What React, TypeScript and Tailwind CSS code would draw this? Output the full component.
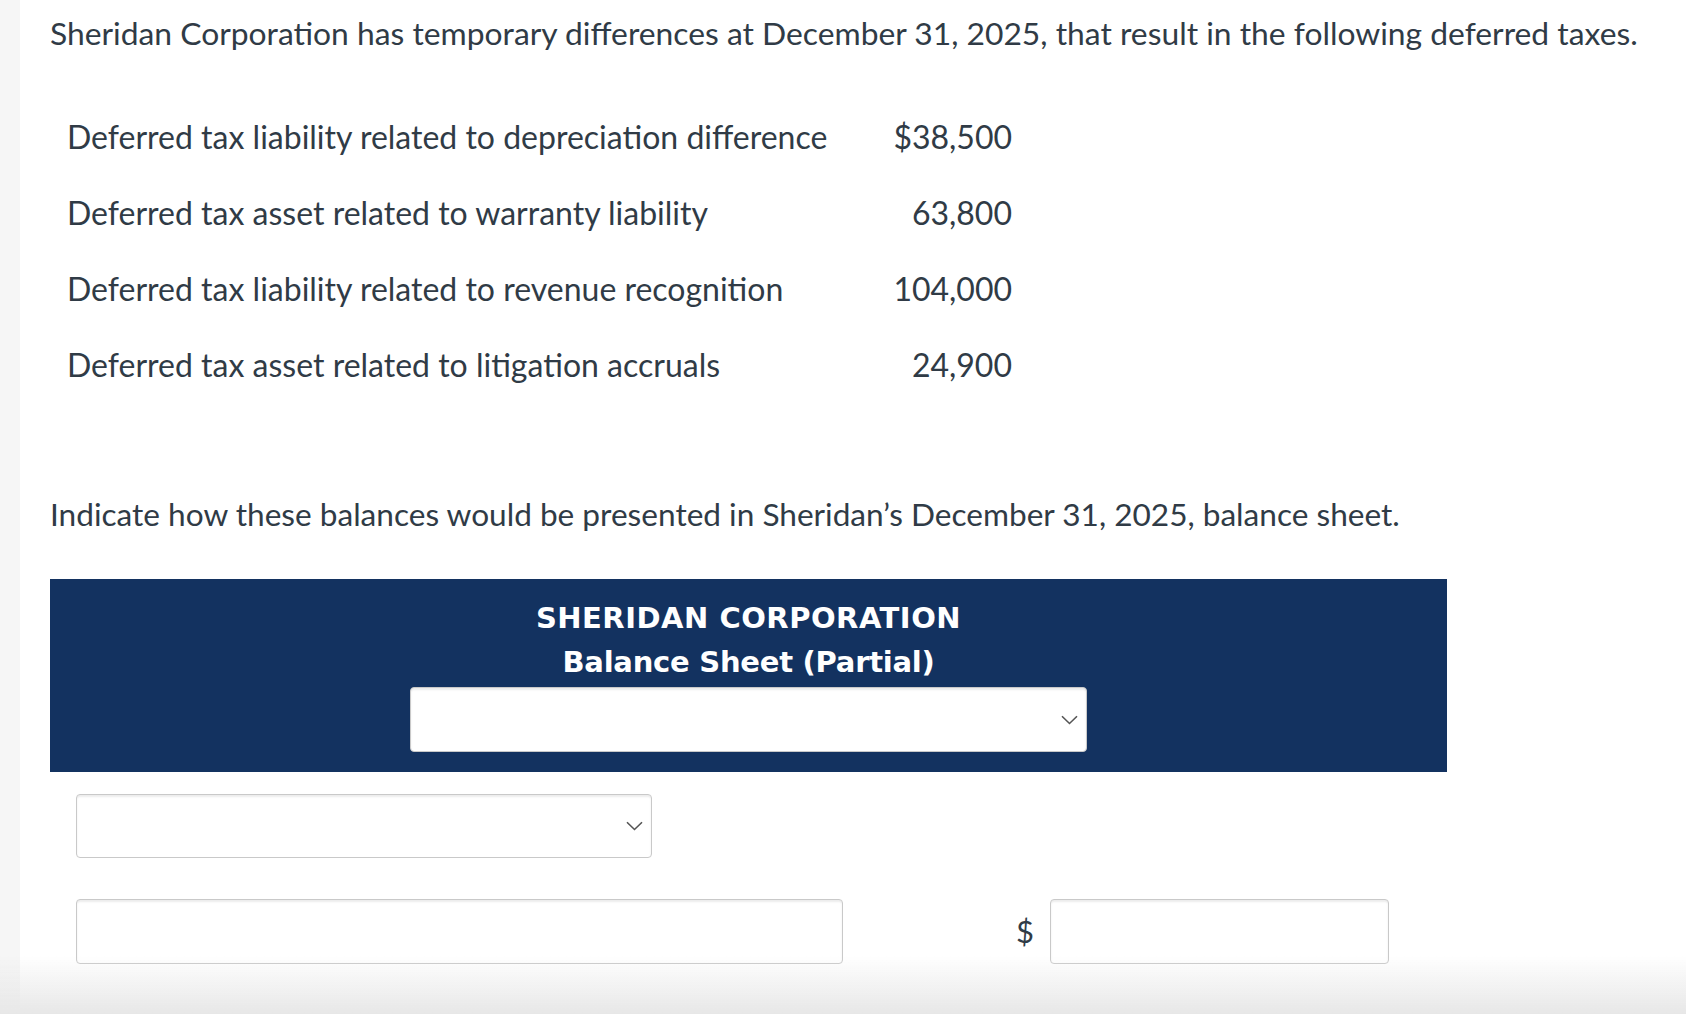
import React from 'react';

const rows = [
  { label: 'Deferred tax liability related to depreciation difference', amount: '$38,500' },
  { label: 'Deferred tax asset related to warranty liability', amount: '63,800' },
  { label: 'Deferred tax liability related to revenue recognition', amount: '104,000' },
  { label: 'Deferred tax asset related to litigation accruals', amount: '24,900' },
];

const Chevron: React.FC = () => (
  <svg width="17" height="10" viewBox="0 0 17 10" className="shrink-0">
    <path d="M1 1.2 L8.5 8.5 L16 1.2" fill="none" stroke="#555" strokeWidth="1.6" />
  </svg>
);

const SelectBox: React.FC<{ className?: string }> = ({ className }) => (
  <div
    className={`flex items-center justify-end pr-[8px] bg-white border border-[#c9c9c9] rounded-[4px] shadow-[inset_0_2px_2px_rgba(0,0,0,0.08)] ${className ?? ''}`}
  >
    <Chevron />
  </div>
);

const InputBox: React.FC<{ className?: string }> = ({ className }) => (
  <div
    className={`bg-white border border-[#c9c9c9] rounded-[4px] shadow-[inset_0_2px_2px_rgba(0,0,0,0.08)] ${className ?? ''}`}
  />
);

const App: React.FC = () => {
  return (
    <div className="min-h-screen flex bg-white text-[#303b46] font-['Lato','Open_Sans',sans-serif]">
      {/* left rail */}
      <div className="w-[20px] shrink-0 bg-[#f6f6f6]" />

      <div className="flex-1 pl-[30px] pt-[13px]">
        <p className="text-[31.8px] leading-[40px] whitespace-nowrap">
          Sheridan Corporation has temporary differences at December 31, 2025, that result in the following deferred taxes.
        </p>

        {/* deferred tax items */}
        <div className="mt-[46px] ml-[17px]">
          {rows.map(row => (
            <div key={row.label} className="flex h-[76px] items-center text-[32px]">
              <span className="w-[760px] whitespace-nowrap">{row.label}</span>
              <span className="w-[185px] text-right">{row.amount}</span>
            </div>
          ))}
        </div>

        <p className="mt-[91px] text-[31.6px] leading-[40px] whitespace-nowrap">
          Indicate how these balances would be presented in Sheridan’s December 31, 2025, balance sheet.
        </p>

        {/* balance sheet header */}
        <div className="mt-[45px] w-[1397px] h-[193px] bg-[#133260] flex flex-col items-center pt-[17px] text-white font-bold font-['DejaVu_Sans',sans-serif]">
          <div className="text-[29px] leading-[44px] tracking-[0.5px]">SHERIDAN CORPORATION</div>
          <div className="text-[29px] leading-[44px] tracking-[-0.25px]">Balance Sheet (Partial)</div>
          <SelectBox className="mt-[3px] w-[677px] h-[65px]" />
        </div>

        <div className="pl-[26px]">
          <SelectBox className="mt-[22px] w-[576px] h-[64px]" />

          <div className="mt-[41px] flex items-center">
            <InputBox className="w-[767px] h-[65px]" />
            <span className="ml-[173px] w-[34px] text-[31px] leading-none">$</span>
            <InputBox className="w-[339px] h-[65px]" />
          </div>
        </div>
      </div>

      {/* bottom fade */}
      <div className="fixed left-0 right-0 bottom-0 h-[58px] bg-gradient-to-b from-transparent to-[#e7e7e7] pointer-events-none" />
    </div>
  );
};

export default App;
